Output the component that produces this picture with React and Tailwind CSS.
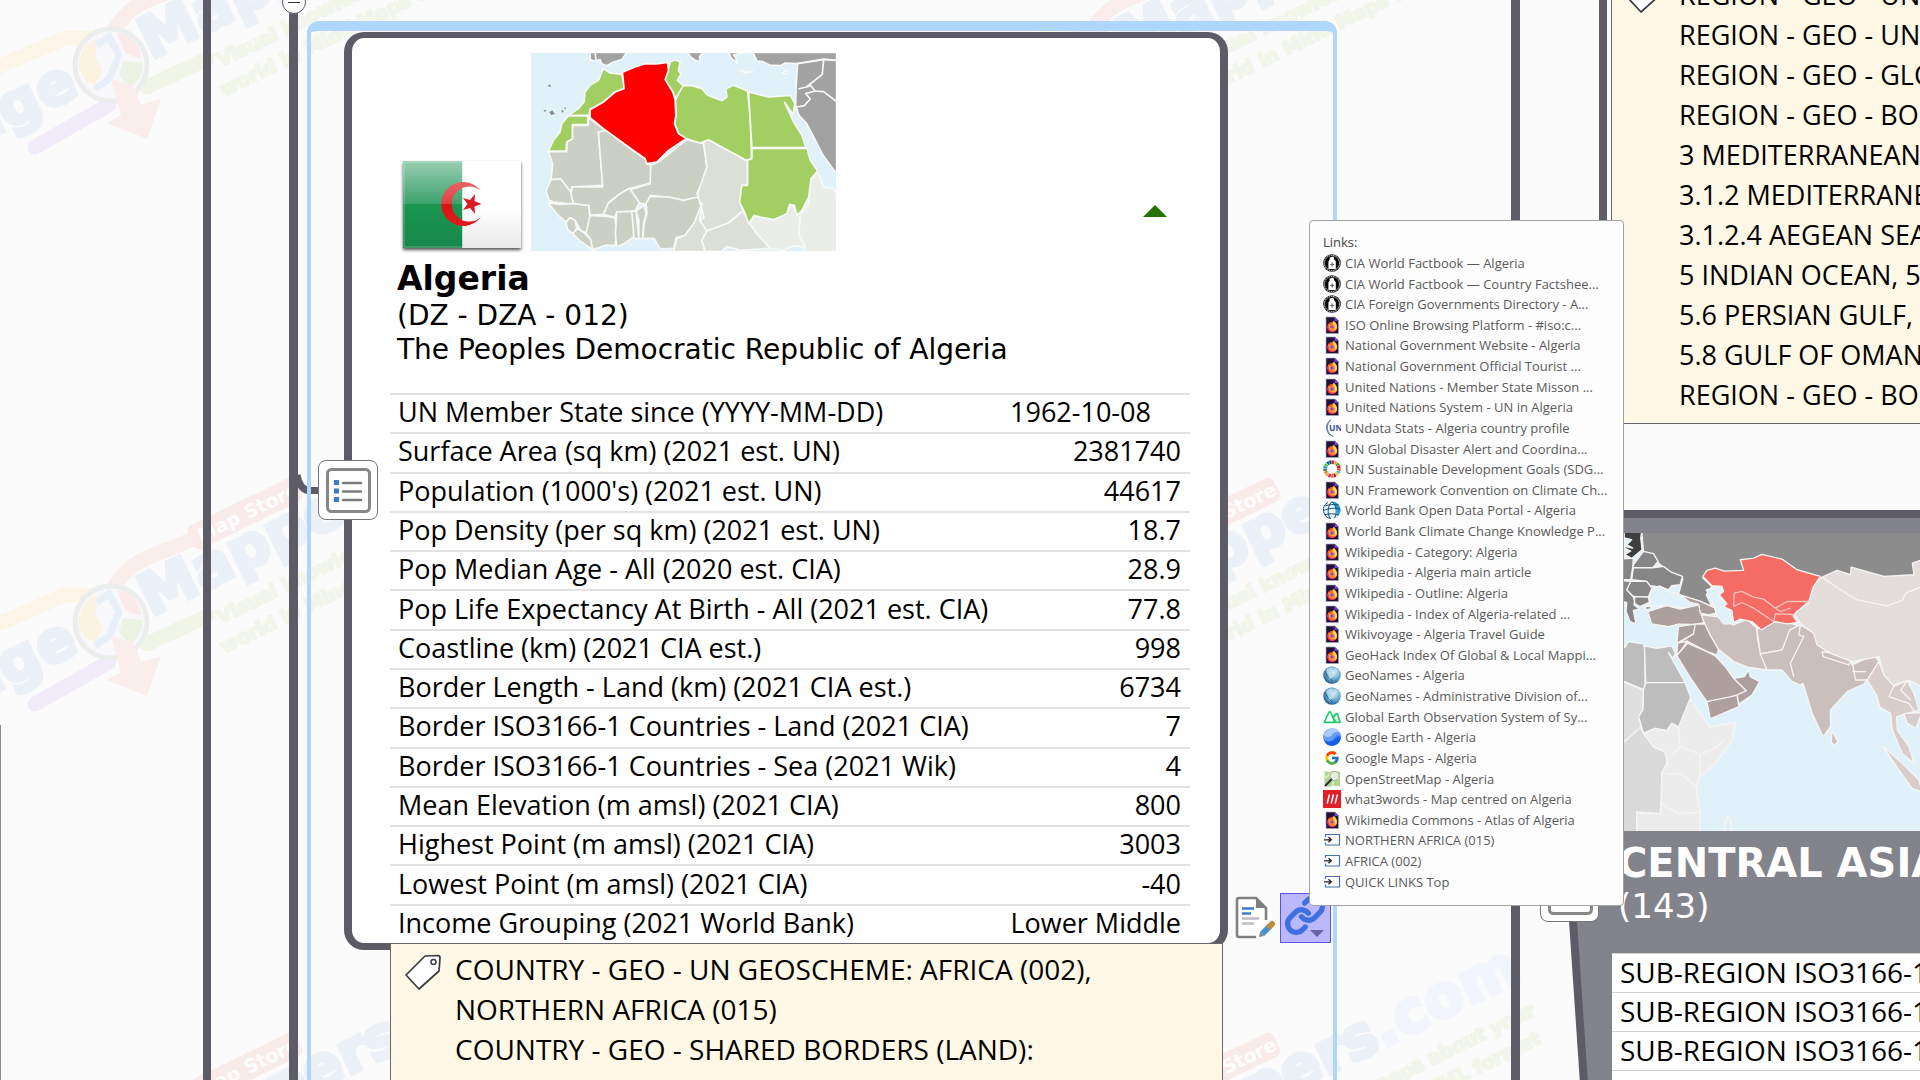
import { FcGoogle } from "react-icons/fc";
import { Link as ChainIcon } from "lucide-react";

const BODY = "font-['Open_Sans','Noto_Sans',sans-serif]";
const HEAD = "font-['DejaVu_Sans',sans-serif]";

const facts = [
  ["UN Member State since (YYYY-MM-DD)", "1962-10-08"],
  ["Surface Area (sq km) (2021 est. UN)", "2381740"],
  ["Population (1000's) (2021 est. UN)", "44617"],
  ["Pop Density (per sq km) (2021 est. UN)", "18.7"],
  ["Pop Median Age - All (2020 est. CIA)", "28.9"],
  ["Pop Life Expectancy At Birth - All (2021 est. CIA)", "77.8"],
  ["Coastline (km) (2021 CIA est.)", "998"],
  ["Border Length - Land (km) (2021 CIA est.)", "6734"],
  ["Border ISO3166-1 Countries - Land (2021 CIA)", "7"],
  ["Border ISO3166-1 Countries - Sea (2021 Wik)", "4"],
  ["Mean Elevation (m amsl) (2021 CIA)", "800"],
  ["Highest Point (m amsl) (2021 CIA)", "3003"],
  ["Lowest Point (m amsl) (2021 CIA)", "-40"],
  ["Income Grouping (2021 World Bank)", "Lower Middle"],
];

const links = [
  ["cia", "CIA World Factbook — Algeria"],
  ["cia", "CIA World Factbook — Country Factshee..."],
  ["cia", "CIA Foreign Governments Directory - A..."],
  ["fox", "ISO Online Browsing Platform - #iso:c..."],
  ["fox", "National Government Website - Algeria"],
  ["fox", "National Government Official Tourist ..."],
  ["fox", "United Nations - Member State Misson ..."],
  ["fox", "United Nations System - UN in Algeria"],
  ["un", "UNdata Stats - Algeria country profile"],
  ["fox", "UN Global Disaster Alert and Coordina..."],
  ["sdg", "UN Sustainable Development Goals (SDG..."],
  ["fox", "UN Framework Convention on Climate Ch..."],
  ["bank", "World Bank Open Data Portal - Algeria"],
  ["fox", "World Bank Climate Change Knowledge P..."],
  ["fox", "Wikipedia - Category: Algeria"],
  ["fox", "Wikipedia - Algeria main article"],
  ["fox", "Wikipedia - Outline: Algeria"],
  ["fox", "Wikipedia - Index of Algeria-related ..."],
  ["fox", "Wikivoyage - Algeria Travel Guide"],
  ["fox", "GeoHack Index Of Global & Local Mappi..."],
  ["geo", "GeoNames - Algeria"],
  ["geo", "GeoNames - Administrative Division of..."],
  ["geoss", "Global Earth Observation System of Sy..."],
  ["earth", "Google Earth - Algeria"],
  ["google", "Google Maps - Algeria"],
  ["osm", "OpenStreetMap - Algeria"],
  ["w3w", "what3words - Map centred on Algeria"],
  ["fox", "Wikimedia Commons - Atlas of Algeria"],
  ["topic", "NORTHERN AFRICA (015)"],
  ["topic", "AFRICA (002)"],
  ["topic", "QUICK LINKS Top"],
];

const regionTags = [
  "REGION - GEO - UN GEOSCHEME",
  "REGION - GEO - UN GEOSCHEME",
  "REGION - GEO - GLOBAL",
  "REGION - GEO - BORDERS",
  "3 MEDITERRANEAN REGION",
  "3.1.2 MEDITERRANEAN SEA",
  "3.1.2.4 AEGEAN SEA",
  "5 INDIAN OCEAN, 5.1",
  "5.6 PERSIAN GULF,",
  "5.8 GULF OF OMAN,",
  "REGION - GEO - BORDERS",
];

const SDG = ["#e5243b", "#dda63a", "#4c9f38", "#c5192d", "#ff3a21", "#26bde2", "#fcc30b", "#a21942", "#fd6925", "#dd1367", "#fd9d24", "#bf8b2e", "#3f7e44", "#0a97d9", "#56c02b", "#00689d", "#19486a"];

function LinkIcon({ kind }) {
  const p = { viewBox: "0 0 18 18", className: "h-[18px] w-[18px] shrink-0", "aria-hidden": true };
  switch (kind) {
    case "cia":
      return (
        <svg {...p}>
          <circle cx="9" cy="9" r="8.8" fill="#1c1c1c" />
          <circle cx="9" cy="9" r="7.6" fill="none" stroke="#e4e4e4" strokeWidth="1" strokeDasharray="1.4 .9" />
          <circle cx="9" cy="9" r="6.6" fill="#050505" />
          <path d="M5.400 15V7.500l1.200-1.700V3.500l3.800-.9.800 2.700 1.600 2V15z" fill="#fff" />
          <path d="M9.200 8.400v4.200M7.200 10.500h4" stroke="#666" strokeWidth="1.200" />
        </svg>
      );
    case "fox":
      return (
        <svg {...p}>
          <path d="M3 1h9l3.500 3.500V17.500H3z" fill="#20123a" stroke="#a9a6b5" strokeWidth=".7" />
          <path d="M11.600 1v4h4z" fill="#7542e5" />
          <circle cx="9.200" cy="11" r="4.900" fill="#ff4f2b" />
          <path d="M5.600 7.600c.5 1.200 1.600 1 2.400 1.400L9.500 7l1-2.200c2 1 3.700 3.400 3.600 6.300a4.700 4.700 0 0 1-4 4.500c-3 .2-5-2-4.500-8z" fill="#ff9a1f" />
          <path d="M10.500 5c2 2 3.600 4 3.400 6.500-.5 2-2 3-3 3 2-2 1.500-5-.9-6.500z" fill="#ffe14a" />
          <circle cx="8.900" cy="10.900" r="1.700" fill="#8a3ff0" />
          <path d="M5.500 8c-1 3 0 6 3.500 6.800 1.500.2 3-.3 4-1.500-1 3-5.500 3.500-7.500 1.200C4 12.500 4.300 10 5.500 8z" fill="#f5226a" />
        </svg>
      );
    case "un":
      return (
        <svg {...p}>
          <path d="M8 .8A9 9 0 0 0 10 17.200C3.500 15 2.500 5 8 .8z" fill="#5d74b9" stroke="#5d74b9" strokeWidth=".8" />
          <text x="6" y="12" fontSize="8.500" fontWeight="700" fill="#3350a0" fontFamily="Open Sans">UN</text>
        </svg>
      );
    case "sdg":
      return (
        <svg {...p}>
          {SDG.map((c, i) => (
            <circle key={c} cx="9" cy="9" r="6.900" fill="none" stroke={c} strokeWidth="3.600" strokeDasharray="2.150 41.200" transform={`rotate(${i * 21.18 - 90} 9 9)`} />
          ))}
        </svg>
      );
    case "bank":
      return (
        <svg {...p}>
          <circle cx="9" cy="9" r="8.500" fill="#e9f6fd" />
          <path d="M9 .5a8.500 8.500 0 0 1 8.500 8.500c0 3-1.500 5-3 6.500 0-5-1-10-5.500-15z" fill="#1b9bd7" />
          <path d="M.8 9.500C5 7.500 12 6.500 17.300 8M2.300 4.800C6 3.500 11 3.200 15.500 4M2 13.500c4.500-1 9-1 13.500.5M9 .8C5 4 3.800 12 7 17.300M9 .8c4.500 3.500 5.500 11 2.500 16.500M8 17.500a8.500 8.500 0 0 1-3-16" fill="none" stroke="#174f78" strokeWidth="1" />
        </svg>
      );
    case "geo":
      return (
        <svg {...p}>
          <defs>
            <radialGradient id="geoBall" cx=".6" cy=".35" r=".7">
              <stop offset="0" stopColor="#dff0f7" />
              <stop offset=".55" stopColor="#6aa9cd" />
              <stop offset="1" stopColor="#1c5687" />
            </radialGradient>
          </defs>
          <circle cx="9" cy="9" r="8.800" fill="url(#geoBall)" />
          <path d="M4 3l4-1.500 2 2-1 2.500 3 2-1 3-3 1-1 3-2-3 .5-3L3 6.500zM12 2l3 2.500-1 3-2.500-2z" fill="#c5e2ee" opacity=".7" />
          <path d="M2.500 5c1 4 2.500 7 7 10" fill="none" stroke="#27628f" strokeWidth="1" />
        </svg>
      );
    case "geoss":
      return (
        <svg {...p}>
          <path d="M1.200 14.300 5.800 4.500q1-1.500 2 0l4 9.800zM11 9l1.800-3q1-1 1.800.3l2.500 8H13L8.500 6.500" fill="none" stroke="#1ccf6d" strokeWidth="1.700" strokeLinejoin="round" />
        </svg>
      );
    case "earth":
      return (
        <svg {...p}>
          <circle cx="9" cy="9" r="8.800" fill="#4285f4" />
          <path d="M.3 8C2 3 6 .2 9.500.2c3.500 0 6.500 2 7.700 5C13 3 11 5 9.500 7.500S4 11 .3 8z" fill="#aecbfa" />
          <path d="M.5 6.500C3 10 7 9.500 9 7s4-4.500 8-2l.7 2.500C13 5.500 12 9 10 11s-6 3-9.500 0z" fill="#669df6" />
          <path d="M1 12c4 2.500 8.500 2 11-1s4-3 5.800-2a8.800 8.800 0 0 1-16 5z" fill="#1a5fe0" />
        </svg>
      );
    case "google":
      return <FcGoogle className="h-4 w-[18px] shrink-0" aria-hidden />;
    case "osm":
      return (
        <svg {...p}>
          <path d="M1.500 1 6 2l5-1.200L17 2v14.500l-6-1-5 1.200-4.500-1z" fill="#b4d496" />
          <path d="M1.500 8 6 5l3-4M9 16l2-6 6-2" stroke="#dcebb5" strokeWidth="2" fill="none" />
          <circle cx="11.500" cy="6" r="4.600" fill="#e3efdc" stroke="#a5ada3" strokeWidth="1" />
          <path d="M8.300 9.500 2.500 15.500" stroke="#2b2b2b" strokeWidth="2" strokeLinecap="round" />
        </svg>
      );
    case "w3w":
      return (
        <svg {...p}>
          <path d="M0 0h18v18H0z" fill="#e11f26" />
          <path d="M6.300 5 4.300 13M10.300 5l-2 8M14.300 5l-2 8" stroke="#fff" strokeWidth="1.500" strokeLinecap="round" />
        </svg>
      );
    default:
      return (
        <svg {...p}>
          <path d="M2.500 6V3.500h14v10.500h-14v-2.500" fill="none" stroke="#4a6fb0" strokeWidth="1.200" />
          <path d="M1 8.800h6.500M5.500 6.300 8.300 8.800 5.500 11.300" fill="none" stroke="#222" strokeWidth="1.300" />
        </svg>
      );
  }
}

function Watermark() {
  return (
    <svg className="absolute inset-0 h-full w-full" aria-hidden="true">
      <defs>
        <g id="brand">
          <g fill="none" strokeWidth="15" strokeLinecap="round">
            <path d="M0-30Q14-56 40-66L120-98" stroke="#faeeed" />
            <path d="M-20-27H-46L-150 18" stroke="#fbf6e8" />
            <path d="M-2 40-76 82" stroke="#f2ebf9" />
            <path d="M36 22 96-6" stroke="#f0f5e8" />
          </g>
          <circle r="36" fill="#f8f8fb" stroke="#eceeee" strokeWidth="5" />
          <path d="M-32 4C-34-14-20-28-12-26L-16-8-8 6-16 20-26 16z" fill="#fbf3e2" />
          <path d="M6-32C24-30 30-14 30-6L14-12z" fill="#faeaea" />
          <path d="M12-4 32-2C32 12 24 20 18 22L8 10z" fill="#ecf3e4" />
          <path d="M-14-20-2-28 8-10-2 14-16 24" fill="none" stroke="#e9eff8" strokeWidth="7" />
          <path d="M0 14 22 20 30 40 50 34 36 74-4 58 10 50z" fill="#faeeed" />
          <g transform="rotate(-26)" className="font-['DejaVu_Sans',sans-serif] font-bold">
            <rect x="108" y="-52" width="120" height="26" rx="6" fill="#faebeb" />
            <text x="116" y="-32" fontSize="19" fill="#fdfdfd">Map Store</text>
            <text x="-160" y="13" fontSize="58" fill="#ebf1f7" stroke="#ebf1f7" strokeWidth="4">age</text>
            <text x="38" y="13" fontSize="58" fill="#ebf1f7" stroke="#ebf1f7" strokeWidth="4">Mappers<tspan fill="#f2f5fb" stroke="#f2f5fb">.com</tspan></text>
            <text x="98" y="50" fontSize="19" fill="#f1f5ea" stroke="#f1f5ea" strokeWidth="2">Visual knowledge maps about your</text>
            <text x="88" y="78" fontSize="19" fill="#f1f5ea" stroke="#f1f5ea" strokeWidth="2">world in Mind Maps &amp; HTML format</text>
          </g>
        </g>
      </defs>
      {[65, 622, 1177].map((y) => [111, 1089].map((x) => <use key={`${x}-${y}`} href="#brand" x={x} y={y} />))}
    </svg>
  );
}

function Flag() {
  return (
    <svg viewBox="0 0 118 87" className="h-[87px] w-[118px] shadow-[0_2px_3px_#555]" role="img" aria-label="Flag of Algeria">
      <defs>
        <linearGradient id="flagGreen" x2="0" y2="1">
          <stop offset="0" stopColor="#98cfb2" />
          <stop offset=".49" stopColor="#3da26d" />
          <stop offset=".5" stopColor="#1b9651" />
          <stop offset="1" stopColor="#17874b" />
        </linearGradient>
        <linearGradient id="flagWhite" x2="0" y2="1">
          <stop offset=".55" stopColor="#fff" />
          <stop offset="1" stopColor="#e8e8e8" />
        </linearGradient>
        <linearGradient id="flagRed" x2="0" y2="1">
          <stop offset="0" stopColor="#ea6468" />
          <stop offset=".49" stopColor="#e04044" />
          <stop offset=".5" stopColor="#d91216" />
          <stop offset="1" stopColor="#de1a1e" />
        </linearGradient>
      </defs>
      <path d="M0 0h59.500v87H0z" fill="url(#flagGreen)" />
      <path d="M59.500 0H118v87H59.500z" fill="url(#flagWhite)" />
      <path d="M78 30A22 22 0 1 0 78 56A17.500 17.500 0 1 1 78 30z" fill="url(#flagRed)" />
      <path d="M72 33 71.500 40 78.500 43 71.500 45.500 72 53 67 47 60 49 64.500 43 60 37 67 39z" fill="#d91c22" />
      <path d="M1 1h116v85H1z" fill="none" stroke="#fff" strokeOpacity=".3" />
    </svg>
  );
}

function AfricaMap() {
  return (
    <svg viewBox="573 98 914 594" preserveAspectRatio="none" className="h-[198px] w-[305px]" role="img" aria-label="Map of Northern Africa">
      <path d="M573 98h914v594H573z" fill="#e0f1f9" />
      <g stroke="#f7f9f7" strokeWidth="5" strokeLinejoin="round">
        <g fill="#a2a2a2">
          <path d="M750 96H860L845 118 820 125 800 136 785 130 780 118 765 122 750 118z" />
          <path d="M765 96 768 120M1042 96 1050 108 1065 120 1080 124 1078 108 1092 96zM1165 96 1172 112 1190 128 1186 112 1180 104 1218 96z" />
          <path d="M1238 96H1489V120L1450 116 1372 130 1335 128 1320 136 1288 134 1268 124 1250 122z" />
          <path d="M1372 130 1450 118 1489 120V460L1470 435 1448 405 1420 350 1398 308 1376 285 1366 255 1368 190z" />
          <path d="M1450 118 1446 162 1398 200 1374 206M1398 200 1412 196 1424 212 1450 214 1489 244M1424 212 1396 220 1410 236 1392 256 1370 260" fill="none" />
          <path d="M1200 150 1212 156 1238 154 1214 158zM1325 158 1342 150 1338 160z" />
        </g>
        <g fill="#cbcfc4">
          <path d="M625 394H680V365L697 355V315H745V292L798 332 775 335 788 495 695 500 692 518 662 476 633 478 638 430z" />
          <path d="M775 335 798 330 880 392 915 415 920 430 932 435V488L868 505 840 520 805 548 790 582 750 585 746 556 700 552 693 520 697 500H788z" />
          <path d="M932 435 955 425 1040 358 1090 370 1100 440 1090 480 1070 520 1078 530 1030 540 985 530 930 526 920 552 898 548 870 508 930 490z" />
          <path d="M633 478 662 476 692 515 700 552 640 545 628 540 618 512z" />
          <path d="M625 548 660 552 700 550 746 556 750 600 742 640 720 628 708 605 690 592 678 606 650 580z" />
          <path d="M678 606 690 592 705 600 710 625 698 640 682 626zM698 640 712 625 735 640 755 660 758 688 720 662z" />
          <path d="M750 585 800 588 825 592 830 640 825 676 800 674 758 688 752 658 738 638z" />
          <path d="M790 582 805 548 840 520 868 504 898 548 885 572 830 575 824 592z" />
          <path d="M830 575 875 573 882 600 880 650 855 668 830 680 826 640z" />
          <path d="M875 573 888 572 896 600V655L882 655zM888 572 912 555 918 580 910 610 908 655H896z" />
          <path d="M918 550 930 528 985 530 1030 540 1072 530 1086 548 1062 608 1035 645 1008 652 1000 684 960 686 942 654 908 655 912 610 920 580z" />
        </g>
        <g fill="#dcdfd8">
          <path d="M1090 362 1105 358 1222 422V492L1205 495 1200 545 1208 572 1165 608 1100 632 1078 600 1092 592 1072 522 1100 440z" />
          <path d="M1086 548 1078 600 1100 632 1085 660 1095 694H1000L1010 655 1035 645 1062 608z" />
          <path d="M1100 632 1165 608 1208 572 1228 610 1250 640 1290 684 1200 690 1160 678 1145 694H1095L1085 660z" />
        </g>
        <g fill="#ebede9">
          <path d="M1228 608 1240 585 1300 598 1355 555 1380 585 1375 640 1395 680 1360 676 1330 690 1290 684 1250 640z" />
          <path d="M1380 585 1405 550 1412 480 1432 456 1450 500 1480 505 1489 520V694H1390L1395 680 1375 640z" />
        </g>
        <g fill="#a3cf62">
          <path d="M790 145 810 158 845 162 850 185 855 203 825 215 805 240 750 266 747 285H685L715 265 732 245 735 215 750 195 775 180z" />
          <path d="M685 287H743V313H697V355L680 365 678 392H625L640 360 660 335 665 310z" />
          <path d="M983 150 990 125 1005 118 1020 125 1015 150 1022 162 1012 180 1032 198 1010 238 998 215 974 178z" />
          <path d="M1030 195 1055 196 1085 205 1102 225 1145 241 1160 230 1157 205 1180 195 1222 212 1230 290 1234 415 1218 420 1105 358 1080 368 1038 355 1015 340 1003 310 1008 285 1006 240 1015 220z" />
          <path d="M1225 215 1285 230 1350 225 1364 250 1358 282 1333 246 1360 305 1385 345 1397 382H1235L1230 300z" />
          <path d="M1235 384H1400L1410 420 1432 452 1412 475 1405 530 1385 570 1370 585 1362 555 1348 552 1340 580 1300 598 1260 590 1242 585 1225 610 1215 580 1198 545 1205 495H1222V420L1235 415z" />
        </g>
        <path d="M847 156 890 138 915 130 950 131 982 126 985 150 975 178 998 215 1005 240 1007 285 1003 310 1015 340 1038 355 985 390 950 425 920 430 915 415 880 390 790 325 750 292V268L790 245 825 215 852 205 850 185z" fill="#fe0000" />
      </g>
      <path d="M610 270 618 268 616 276zM628 276 636 270 645 280 634 284zM664 268 672 272 666 278zM672 264 678 260 676 268zM625 193h7v6h-7z" fill="#8a8a8a" />
    </svg>
  );
}

function AsiaMap() {
  return (
    <svg viewBox="36 160 924 892" preserveAspectRatio="xMinYMin slice" className="h-[298px] w-full" role="img" aria-label="Map of Asia">
      <path d="M36 160H2000V1052H36z" fill="#e0f1f9" />
      <g stroke="#f7f5f4" strokeWidth="4" strokeLinejoin="round">
        <path d="M125 156H964V300L640 310 420 290 340 275 308 295 335 320 318 345 335 380 300 365 235 345 248 296 200 272 165 240 130 215z" fill="#8c8c8c" />
        <g fill="#868686">
          <path d="M95 262 130 215 160 222 174 245 158 264 100 264zM95 300 100 264 158 264 190 260 215 278 247 290 240 315 215 318 205 330 185 322 150 318 140 305z" />
          <path d="M78 330 92 305 140 305 155 325 145 352 100 350zM36 240 100 235 98 262 92 300 36 300z" />
          <path d="M100 350 145 352 148 368 120 380 105 372zM36 300 92 305 80 330 104 356 102 375 118 388 100 392 108 432 90 425 78 395 80 368 36 360z" />
        </g>
        <path d="M72 156H125L122 175 126 210 95 236 74 225 92 214 74 205z" fill="#3f3f3f" />
        <path d="M72 175 95 180 80 195 98 205 72 200z" fill="#e0f1f9" />
        <path d="M158 330 178 318 196 328 212 338 238 345 270 366 262 386 205 378 150 378 148 350z" fill="#e0f1f9" />
        <g fill="#ae9f9f">
          <path d="M143 395 200 377 240 388 300 374 306 400 312 428 280 434 235 433 205 440 155 432z" />
          <path d="M135 380 155 378 150 388 138 390z" />
          <path d="M240 345 300 364 345 385 348 400 325 405 300 400 296 374 270 368z" />
          <path d="M235 440 285 433 280 462 230 490zM285 433 318 432 328 462 355 508 350 525 320 515 262 484 232 492 280 462z" />
          <path d="M232 490 240 488 262 484 240 515 230 525z" />
          <path d="M230 527 262 490 320 515 345 528 375 560 400 595 437 605 438 640 392 662 320 665 275 600z" />
          <path d="M320 665 392 650 410 645 416 680 330 716zM400 595 432 590 445 570 450 590 478 605 455 645 416 672 410 645 438 632z" />
        </g>
        <path d="M36 495 75 502 85 485 130 492 135 505 135 630 36 590z" fill="#bdbdbd" />
        <path d="M133 498 170 505 215 498 226 520 218 535 205 518 240 580 255 608H137z" fill="#bdbdbd" />
        <path d="M137 608H255L272 655 258 700 235 740 215 730 200 752 165 745 130 760 115 710 128 690 130 630z" fill="#bdbdbd" />
        <path d="M36 590 130 630 128 690 115 710 125 742 80 780 36 800z" fill="#dfdfdf" />
        <path d="M36 800 80 780 120 742 160 800 195 815 202 845 185 880 185 950 180 1000 110 995 110 1056H36z" fill="#dadada" />
        <path d="M130 760 165 745 200 752 215 730 235 742 270 655 300 700 330 740 405 728 395 780 345 850 295 895 288 930 300 995 298 1056H110V998L182 1000 185 880 202 845 195 815 160 800z" fill="#ececec" />
        <path d="M235 740 240 800 300 822 345 805 375 775M240 800 215 825M300 822V890M200 880 245 882 288 920M182 970 235 1000 298 996M370 1056 380 1010 392 1020 395 1056" fill="none" />
        <path d="M303 405 350 410 400 435 440 418 470 445 472 480 480 515 500 570 445 562 400 545 355 508 328 462 312 428z" fill="#cbbfbe" />
        <path d="M470 448 520 425 570 430 600 440 565 470 545 510 480 522z" fill="#cbbfbe" />
        <path d="M480 522 545 510 568 450 600 435 640 458 650 492 680 515 750 540 755 555 820 525 835 545 800 600 790 612 740 635 690 690 690 740 668 770 635 700 608 610 600 615 575 605 545 570 500 570z" fill="#cbbfbe" />
        <path d="M600 435 595 465 610 470 570 550 580 590M665 515 700 520 750 543 745 555 668 530zM755 545 765 600 800 600M755 575H795" fill="none" />
        <path d="M695 752 712 785 702 796 692 785z" fill="#cbbfbe" />
        <path d="M580 400 625 370 640 312 665 292 710 272 750 285 752 262 850 290 940 285 935 250 964 240V620L925 602 890 610 870 622 850 590 835 530 755 545 690 520 650 495 640 460 600 432z" fill="#e3dedc" />
        <path d="M665 292 720 330 770 360 860 378 905 362 915 340 964 320" fill="none" />
        <path d="M835 545 850 585 880 618 920 602 940 640 955 690 920 700 888 710 890 750 925 800 940 850 905 820 875 750 870 700 838 682 828 645 800 600z" fill="#d8cdca" />
        <path d="M880 618 865 650 895 660 925 670 945 700M920 602 900 630 930 660" fill="none" />
        <path d="M848 800 900 845 955 900 964 935 935 925 895 870zM910 700 964 698 945 745 920 730z" fill="#d8cdca" />
        <path d="M318 330 365 318 368 340 356 348 385 385 395 432 370 432 350 405 340 375z" fill="#e0f1f9" />
        <path d="M308 290 320 272 345 265 372 274 430 272 420 240 460 235 485 224 545 238 590 270 660 290 638 322 625 365 590 395 578 408 592 428 560 432 525 425 500 440 483 450 455 425 420 418 400 428 395 392 370 380 380 372 357 345 370 335 365 320 335 318z" fill="#f46c64" />
        <path d="M400 380 402 340 425 335 460 352 490 358 525 385 560 365 628 365M400 380 425 368 460 385 520 425 525 402 578 404M525 385 540 395 570 385" fill="none" stroke="#f9c3bd" />
      </g>
    </svg>
  );
}

function ListGlyph() {
  return (
    <svg viewBox="0 0 60 60" className="h-[60px] w-[60px] shrink-0" aria-hidden="true">
      <rect x="9.500" y="9.500" width="42" height="42" rx="4" fill="#fff" stroke="#878787" strokeWidth="3" />
      <path d="M16 20h5v5h-5zM16 28.500h5v5h-5zM16 37h5v5h-5z" fill="#3c7cc8" />
      <path d="M25 23h18M25 31.500h18M25 40h18" stroke="#7c7c7c" strokeWidth="2.500" strokeLinecap="round" />
    </svg>
  );
}

function NodeButton({ className, label }) {
  return (
    <button aria-label={label} className={`absolute flex items-center justify-center overflow-hidden rounded-lg border border-[#75757c] bg-white ${className}`}>
      <ListGlyph />
    </button>
  );
}

function TagGlyph({ className }) {
  return (
    <svg viewBox="0 0 36 36" className={`h-9 w-9 shrink-0 ${className}`} aria-hidden="true">
      <path d="M20 2 33 1.500Q35 1.500 35 4L34 17 14 35 1 21z" fill="#fff" stroke="#3b3b44" strokeWidth="1.700" strokeLinejoin="round" />
      <circle cx="28.500" cy="8" r="2.500" fill="#fff" stroke="#3b3b44" strokeWidth="1.500" />
    </svg>
  );
}

function AlgeriaNode() {
  return (
    <article className="absolute top-8 left-[344px] w-[884px] rounded-[20px] border-8 border-t-6 border-b-[7px] border-[#5d5c66] bg-white pr-[30px] pl-[38px] text-black">
      <div className="flex items-end gap-[10px] pt-[15px] pl-[13px]">
        <div className="pb-[3px]"><Flag /></div>
        <AfricaMap />
        <button aria-label="Collapse" className="mb-[34px] ml-auto p-0 pr-[23px]">
          <svg viewBox="0 0 24 12" className="h-3 w-6" aria-hidden="true"><path d="M0 12 12 0 24 12z" fill="#267300" /></svg>
        </button>
      </div>
      <header className={`${HEAD} pt-2 pl-[7px] text-[28px] leading-[34px]`}>
        <h1 className="text-[33px] leading-10 font-bold">Algeria</h1>
        <p>(DZ - DZA - 012)</p>
        <p>The Peoples Democratic Republic of Algeria</p>
      </header>
      <table className={`${BODY} mt-[26px] h-[550px] w-full border-collapse text-[27px] leading-[30px]`}>
        <tbody>
          {facts.map(([k, v], i) => (
            <tr key={k} className="border-t-2 border-[#e3e3e3]">
              <th scope="row" className="p-0 pb-[3px] pl-2 text-left font-normal whitespace-nowrap">{k}</th>
              <td className={i === 0 ? "w-[180px] p-0 pb-[3px] text-left whitespace-nowrap" : "w-[180px] p-0 pr-[9px] pb-[3px] text-right whitespace-nowrap"}>{v}</td>
            </tr>
          ))}
        </tbody>
      </table>
    </article>
  );
}

function LinksPopup() {
  return (
    <nav aria-label="Links" className={`${BODY} absolute top-[220px] left-[1309px] grid h-[686px] w-[315px] auto-rows-fr rounded border border-[#a3a3a3] bg-[#fdfdfd] pt-[11px] pr-2 pb-[13px] pl-[13px] text-[13px] leading-5 text-[#5a5a5a]`}>
      <h2 className="text-[#444]">Links:</h2>
      {links.map(([kind, text]) => (
        <a key={text} href="#" className="flex items-center gap-1 whitespace-nowrap">
          <LinkIcon kind={kind} />
          {text}
        </a>
      ))}
    </nav>
  );
}

function CentralAsiaNode() {
  return (
    <section className="absolute top-[510px] right-0 left-[1540px] h-[640px]">
      <svg className="absolute inset-0 h-full w-full overflow-visible" aria-hidden="true">
        <path d="M0 0H2000V900H62L28 396 0 100z" fill="#5d5c66" />
        <path d="M0 8H2000V900H70L36 396 0 108z" fill="#83838b" />
      </svg>
      <div className="relative ml-[72px] pt-[23px]">
        <AsiaMap />
        <header className={`${HEAD} pt-[9px] pl-[6px] text-white`}>
          <h2 className="text-[40px] leading-[46px] font-bold whitespace-nowrap">CENTRAL ASIA</h2>
          <p className="text-[34px] leading-[40px]">(143)</p>
        </header>
        <table className={`${BODY} mt-[27px] w-full border-collapse bg-white text-[28px] leading-9 text-black`}>
          <tbody>
            {[0, 1, 2, 3].map((i) => (
              <tr key={i} className="h-[39px] border-t border-[#cfcfcf]">
                <td className="max-w-0 overflow-hidden p-0 pb-0.5 pl-2 whitespace-nowrap">{i < 3 ? "SUB-REGION ISO3166-1" : ""}</td>
              </tr>
            ))}
          </tbody>
        </table>
      </div>
      <NodeButton label="Central Asia outline" className="top-[352px] left-0 h-[60px] w-[59px]" />
    </section>
  );
}

export default function App() {
  return (
    <main className="relative h-screen overflow-hidden bg-[#fbfbfb]">
      <Watermark />
      <div className="absolute inset-y-0 left-[203px] w-2 bg-[#5d5c66]" />
      <div className="absolute inset-y-0 left-[289px] w-[9px] bg-[#5d5c66]" />
      <div className="absolute top-[725px] bottom-0 left-0 w-px bg-[#8b8b90]" />
      <div className="absolute inset-y-0 left-[1511px] w-[9px] bg-[#5d5c66]" />
      <div className="absolute top-0 left-[1599px] h-[520px] w-2 bg-[#5d5c66]" />
      <svg className="absolute top-[470px] left-[297px] h-6 w-6" viewBox="0 0 24 24" aria-hidden="true">
        <path d="M0 5Q3 20 12 20.500H24" fill="none" stroke="#5d5c66" strokeWidth="7" />
      </svg>
      <button aria-label="Collapse branch" className="absolute -top-[10px] left-[282px] flex h-6 w-6 items-center justify-center rounded-full border border-[#5d5c66] bg-white">
        <span className="h-px w-3 bg-[#333]" />
      </button>

      <div className="absolute top-[21px] -bottom-4 left-[307px] w-[1030px] rounded-xl border-4 border-t-10 border-[#afd6fc]" />
      <AlgeriaNode />
      <NodeButton label="Algeria outline" className="top-[460px] left-[318px] h-[60px] w-[60px]" />

      <aside className={`${BODY} absolute top-[943px] left-[390px] flex h-[200px] w-[833px] gap-[14px] border border-[#66666c] bg-[#fff8e6] pt-[5px] pl-[14px] text-[28px] leading-10 text-black`}>
        <TagGlyph className="mt-[5px]" />
        <div className="whitespace-nowrap">
          <p>COUNTRY - GEO - UN GEOSCHEME: AFRICA (002),</p>
          <p>NORTHERN AFRICA (015)</p>
          <p>COUNTRY - GEO - SHARED BORDERS (LAND):</p>
        </div>
      </aside>

      <button aria-label="Edit notes" className="absolute top-[896px] left-[1234px]">
        <svg viewBox="0 0 42 44" className="h-11 w-[42px]" aria-hidden="true">
          <path d="M22 41H5Q3 41 3 39V4Q3 2 5 2H22L32 12V24" fill="#fff" stroke="#808080" strokeWidth="2.600" />
          <path d="M22 2 32 12H22z" fill="#808080" />
          <path d="M8 12.500H20M8 17.500H17" stroke="#3c7cc8" strokeWidth="2.600" />
          <path d="M8 22.500H25M8 27.500H20" stroke="#bdbdbd" strokeWidth="2.400" />
          <path d="M36 30 28 38" stroke="#4c90d0" strokeWidth="6" />
          <path d="M38 28 36 30" stroke="#c08a3c" strokeWidth="6" strokeLinecap="round" />
          <path d="M26 36 30 40 25 41z" fill="#808890" />
        </svg>
      </button>
      <button aria-label="Show links" className="absolute top-[893px] left-[1280px] flex h-[50px] w-[51px] flex-col border border-[#5a55e8] bg-[#bbb9fb]">
        <ChainIcon className="ml-[3px] h-[42px] w-[42px] shrink-0 text-[#3f6fe0]" strokeWidth={3} aria-hidden="true" />
        <svg viewBox="0 0 14 7" className="-mt-1.5 mr-1.5 h-[7px] w-3.5 self-end" aria-hidden="true">
          <path d="M0 0H14L7 7z" fill="#6a62a8" />
        </svg>
      </button>

      <aside className={`${BODY} absolute top-0 right-0 left-[1611px] h-[424px] overflow-hidden border-b border-l border-[#66666c] bg-[#fff8e6] text-[27px] leading-10 text-black`}>
        <div className="-mt-[25px] flex gap-4 pl-[15px]">
          <TagGlyph className="mt-0.5" />
          <div className="whitespace-nowrap">
            {regionTags.map((t, i) => (
              <p key={i}>{t}</p>
            ))}
          </div>
        </div>
      </aside>

      <CentralAsiaNode />
      <LinksPopup />
    </main>
  );
}
